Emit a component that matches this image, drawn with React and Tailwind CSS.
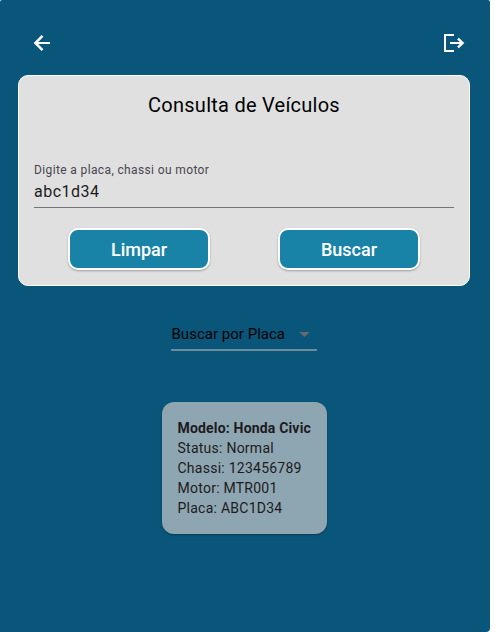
const ArrowBack = () => (
  <svg width="24" height="24" viewBox="0 0 24 24" fill="none" stroke="#fff" strokeWidth="2.5">
    <path d="M20 12H6" strokeWidth="2" />
    <path d="M12.5 4.8L5.4 12l7.1 7.2" />
  </svg>
);

const Logout = () => (
  <svg width="24" height="24" viewBox="0 0 24 24" fill="none" stroke="#fff" strokeWidth="2">
    <path d="M13 4H4v16h9" />
    <path d="M9 12h12" />
    <path d="M17 7.6l4.6 4.4-4.6 4.4" strokeWidth="2.4" />
  </svg>
);

const ActionButton = ({ children }) => (
  <button className="flex h-[42px] w-[142px] items-center justify-center rounded-[10px] border-2 border-white bg-[#1983a7] pt-[2px] text-[18px] font-medium leading-none text-white shadow-[0_1px_2px_rgba(0,0,0,0.3)]">
    {children}
  </button>
);

const details = ['Status: Normal', 'Chassi: 123456789', 'Motor: MTR001', 'Placa: ABC1D34'];

export default function App() {
  return (
    <div className="h-[632px] w-[500px] overflow-hidden bg-white font-['Roboto',sans-serif]">
      <div className="flex h-full w-[490px] flex-col items-center rounded-t-[2px] rounded-br-[4px] bg-[#0a557a] pr-[2px]">
        <header className="flex h-[75px] w-full items-start justify-between pl-[30px] pr-[23px] pt-[31px]">
          <ArrowBack />
          <Logout />
        </header>

        <section className="flex h-[211px] w-[452px] shrink-0 flex-col rounded-[10px] border border-white bg-[#e0e0e0] px-[15px]">
          <h1 className="mt-[15px] text-center text-[20px] leading-[28px] tracking-[0.25px] text-black">
            Consulta de Veículos
          </h1>
          <label className="mt-[43px] text-[12px] leading-[16px] tracking-[0.37px] text-[#49454f]">
            Digite a placa, chassi ou motor
          </label>
          <div className="mt-[1px] h-[29px] border-b border-[#757579] pt-[1px] text-[16px] leading-[24px] tracking-[0.5px] text-[#1d1b20]">
            abc1d34
          </div>
          <div className="mt-[20px] flex justify-between px-[34px]">
            <ActionButton>Limpar</ActionButton>
            <ActionButton>Buscar</ActionButton>
          </div>
        </section>

        <div className="mt-[36px] flex h-[29px] w-[146px] shrink-0 items-start justify-between border-b-2 border-[#6c8c9d] text-[15px] leading-[24px] tracking-[0.02px] text-black">
          <span className="whitespace-nowrap pl-[0.5px]">Buscar por Placa</span>
          <svg className="mr-[7px] mt-[10px]" width="11" height="5" viewBox="0 0 11 5" fill="#6b6669">
            <path d="M0 0h11L5.5 5z" />
          </svg>
        </div>

        <section className="mt-[51px] h-[132px] w-[165px] shrink-0 whitespace-nowrap rounded-[12px] bg-[#8ea6b2] px-[16px] pt-[16px] text-[14px] leading-[20px] tracking-[0.25px] text-[#1d1b20] shadow-[0_1px_2px_rgba(0,0,0,0.3)]">
          <p className="font-bold tracking-[0.18px]">Modelo: Honda Civic</p>
          {details.map((line) => (
            <p key={line}>{line}</p>
          ))}
        </section>
      </div>
    </div>
  );
}
